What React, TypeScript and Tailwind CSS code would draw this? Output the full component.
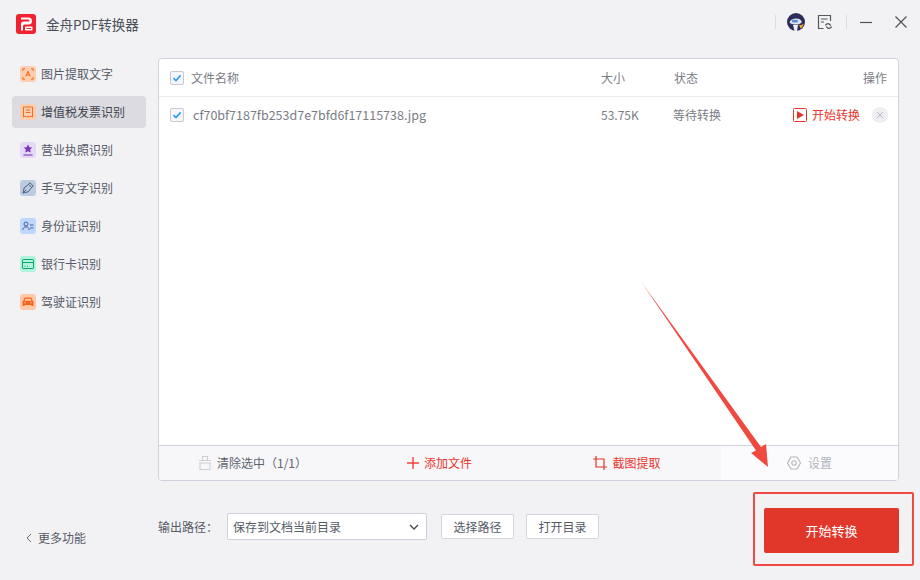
import React from "react";

const font = { fontFamily: '"Noto Sans CJK SC", "Noto Sans", sans-serif' };

function Check() {
  return (
    <span className="flex h-[14px] w-[14px] shrink-0 items-center justify-center rounded-[2px] border border-[#c9c9cf] bg-[#f4f6fb]">
      <svg width="10" height="10" viewBox="0 0 10 10" fill="none">
        <path d="M1.5 5.2 4 7.6 8.6 2.4" stroke="#2f9bf4" strokeWidth="1.6" />
      </svg>
    </span>
  );
}

function Tile({ bg, children }: { bg: string; children: React.ReactNode }) {
  return (
    <span className={`flex h-4 w-4 shrink-0 items-center justify-center rounded-[3px] ${bg}`}>
      <svg width="12" height="12" viewBox="0 0 12 12" fill="none">{children}</svg>
    </span>
  );
}

const navItems: { label: string; active?: boolean; bg: string; icon: React.ReactNode }[] = [
  {
    label: "图片提取文字",
    bg: "bg-[#ffcdb0]",
    icon: (
      <g stroke="#f3691d" strokeWidth="1">
        <path d="M.8 3V.8H3M9 .8h2.2V3M.8 9v2.2H3M9 11.2h2.2V9" />
        <path d="M3.8 8.5 6 3.2l2.2 5.3M4.6 7h2.8" />
      </g>
    ),
  },
  {
    label: "增值税发票识别",
    active: true,
    bg: "bg-[#ffcdb0]",
    icon: (
      <g stroke="#f3691d" strokeWidth="1">
        <path d="M1.5 1h9v10l-1.5-.8-1.5.8-1.5-.8-1.5.8-1.5-.8-1.5.8z" />
        <path d="M3.8 4h4.4M3.8 6.5h4.4" />
      </g>
    ),
  },
  {
    label: "营业执照识别",
    bg: "bg-[#e4d9f6]",
    icon: (
      <g>
        <path d="M6 .6 7.4 3.2l2.8.4-2 2 .5 2.9L6 7.2 3.300 8.500l.5-2.900-2-2 2.800-.4z" fill="#7b35b8" />
        <path d="M1.500 11h9" stroke="#7b35b8" strokeWidth="1.100" />
      </g>
    ),
  },
  {
    label: "手写文字识别",
    bg: "bg-[#bccbe0]",
    icon: (
      <g stroke="#4d5f86" strokeWidth="1">
        <path d="M1 11 2.200 5.800 6.600 2.400 9.600 5.400 6.200 9.800z" />
        <path d="M6.600 2.400 8 .8l3.200 3.200-1.600 1.400M1 11l3.200-3.200" />
      </g>
    ),
  },
  {
    label: "身份证识别",
    bg: "bg-[#bfd6fd]",
    icon: (
      <g stroke="#45619e" strokeWidth="1">
        <circle cx="4" cy="4" r="2" />
        <path d="M.8 10c.3-2.200 1.500-3.200 3.200-3.200S6.900 7.800 7.200 10M8 5h3.400M8 8h3.400" />
      </g>
    ),
  },
  {
    label: "银行卡识别",
    bg: "bg-[#b3f3dd]",
    icon: (
      <g stroke="#0ca56e" strokeWidth="1">
        <rect x=".5" y="1.500" width="11" height="9" rx=".6" />
        <path d="M.5 4.500h11" />
        <path d="M2.500 8.300h1M5 8.300h1" />
      </g>
    ),
  },
  {
    label: "驾驶证识别",
    bg: "bg-[#ffc9a8]",
    icon: (
      <g>
        <path d="M2.600 1.500h6.800l1.300 3.200.8.600V10H9.500V9H2.500v1H.5V5.300l.8-.6zM3.300 2.700l-.8 2h7l-.8-2z" fill="#f8621a" fillRule="evenodd" />
        <circle cx="3" cy="6.800" r=".8" fill="#ffc9a8" />
        <circle cx="9" cy="6.800" r=".8" fill="#ffc9a8" />
      </g>
    ),
  },
];

export default function App() {
  return (
    <div style={font} className="relative flex h-[580px] w-[920px] flex-col overflow-hidden bg-[#f2f2f5] text-[12px] text-[#555a66]">
      {/* Title bar */}
      <header className="flex h-[58px] shrink-0 items-start">
        <div className="flex items-center pl-4 pt-3">
          <svg width="20" height="20" viewBox="0 0 20 20" className="mb-[2px]">
            <rect width="20" height="20" rx="3" fill="#f0222f" />
            <path d="M5 3.500h7.500a3.500 3.500 0 0 1 0 7H8.500a1.500 1.500 0 0 0-1.500 1.500v4.500H5V9.800a2.500 2.500 0 0 1 2.500-2.300h5a1 1 0 0 0 0-2H5z" fill="#fff" />
            <rect x="9" y="12.500" width="7.500" height="4" rx="1" fill="#fff" />
            <path d="M10.500 14.500h4.500" stroke="#f0222f" strokeWidth="1" />
          </svg>
          <span className="ml-[10px] text-[13.5px] leading-[25px] text-[#4b4f58]">金舟PDF转换器</span>
        </div>
        <div className="ml-auto flex items-center pt-[12px]">
          <span className="h-[14px] w-px bg-[#dcdce0]" />
          <svg width="20" height="20" viewBox="0 0 20 20" className="ml-[10px]">
            <circle cx="10" cy="10" r="9" fill="#2c2c5a" />
            <path d="M3.500 10.500c1-3 3.500-4 6.500-4s5 1 6 3.500c-2 2-3 2.500-6 2.500s-5-.5-6.500-2z" fill="#dfe3ee" />
            <rect x="6" y="7.800" width="6" height="2.600" rx="1.200" fill="#5a8fd0" />
            <path d="M7 13h5l-1 6H8.500z" fill="#eef0f6" />
            <path d="M13 13l2 4 3-5.500-2.500 1.500z" fill="#f5a623" />
          </svg>
          <svg width="16" height="16" viewBox="0 0 16 16" fill="none" stroke="#55585f" strokeWidth="1.200" className="ml-[11px]">
            <path d="M6.500 14.500H1.500v-13h12v5.500" />
            <path d="M4 5h6.500M4 8h3" />
            <path d="M8.500 11.500c.4-1.700 2.700-2.500 4.200-1l1 1.200M14.500 12.500c-.5 1.800-2.900 2.400-4.300 1l-.9-1" />
          </svg>
          <span className="ml-[13px] h-[14px] w-px bg-[#dcdce0]" />
          <svg width="14" height="14" viewBox="0 0 14 14" stroke="#50535a" strokeWidth="1.200" className="ml-[12px]">
            <path d="M1 7.500h12" />
          </svg>
          <svg width="14" height="14" viewBox="0 0 14 14" stroke="#50535a" strokeWidth="1.200" className="ml-[21px] mr-[12px]">
            <path d="M1.500 1.500l11 11M12.500 1.500l-11 11" />
          </svg>
        </div>
      </header>

      <div className="flex flex-1">
        {/* Sidebar */}
        <aside className="flex w-[158px] shrink-0 flex-col justify-between pb-[33px] pl-3 pr-3">
          <nav className="flex flex-col gap-[6px]">
            {navItems.map((item) => (
              <div
                key={item.label}
                className={`flex h-[32px] w-[134px] items-center rounded-[4px] pl-2 ${item.active ? "bg-[#dcdce0] text-[#3f434d]" : ""}`}
              >
                <Tile bg={item.bg}>{item.icon}</Tile>
                <span className="ml-[5px]">{item.label}</span>
              </div>
            ))}
          </nav>
          <div className="flex items-center pl-[12px]">
            <svg width="10" height="12" viewBox="0 0 10 12" fill="none" stroke="#666a73" strokeWidth="1">
              <path d="M7 2 3 6l4 4" />
            </svg>
            <span className="ml-[4px]">更多功能</span>
          </div>
        </aside>

        {/* Main */}
        <main className="flex w-[741px] shrink-0 flex-col">
          <section className="flex h-[423px] flex-col overflow-hidden rounded-[4px] border border-[#d2d2de] bg-white">
            <div className="flex h-[38px] shrink-0 items-center border-b border-[#ececef] pl-[11px] pr-[11px] text-[#7a7d85]">
              <Check />
              <span className="ml-[7px] w-[410px]">文件名称</span>
              <span className="w-[73px]">大小</span>
              <span>状态</span>
              <span className="ml-auto">操作</span>
            </div>
            <div className="flex h-[36px] shrink-0 items-center pl-[11px] pr-[10px] text-[#7a7d85]">
              <Check />
              <span className="ml-[9px] w-[408px] text-[12.5px]">cf70bf7187fb253d7e7bfd6f17115738.jpg</span>
              <span className="w-[72px]">53.75K</span>
              <span>等待转换</span>
              <span className="ml-auto flex items-center text-[#e8352b]">
                <svg width="14" height="14" viewBox="0 0 14 14" fill="none">
                  <rect x=".5" y=".5" width="13" height="13" rx="1" stroke="#e2352b" />
                  <path d="M4 3l7 4-7 4z" fill="#e2352b" />
                </svg>
                <span className="ml-[5px]">开始转换</span>
                <span className="ml-3 flex h-4 w-4 items-center justify-center rounded-full bg-[#eeeef2]">
                  <svg width="8" height="8" viewBox="0 0 8 8" stroke="#b9bac2" strokeWidth="1">
                    <path d="M1 1l6 6M7 1 1 7" />
                  </svg>
                </span>
              </span>
            </div>
            <div className="flex-1" />
            <div className="flex h-[35px] shrink-0 border-t border-[#d2d2de] bg-[#f7f7fa]">
              <div className="flex w-[187px] items-center justify-center text-[#60646e]">
                <svg width="14" height="16" viewBox="0 0 14 16" fill="none" stroke="#cfcfd4" strokeWidth="1.100">
                  <path d="M4.500 5V1.500h5V5M1 5.500h12M1 8h12M2 8v6.500h10V8" />
                </svg>
                <span className="ml-[5px]">清除选中（1/1）</span>
              </div>
              <div className="flex w-[187px] items-center justify-center text-[#e8352b]">
                <svg width="12" height="12" viewBox="0 0 12 12" stroke="#f0443a" strokeWidth="1.400">
                  <path d="M6 0v12M0 6h12" />
                </svg>
                <span className="ml-[5px]">添加文件</span>
              </div>
              <div className="flex w-[188px] items-center justify-center text-[#e8352b]">
                <svg width="14" height="14" viewBox="0 0 14 14" fill="none" stroke="#e2352b" strokeWidth="1.200">
                  <path d="M3 0v11h11M0 3h11v11" />
                </svg>
                <span className="ml-[5px]">截图提取</span>
              </div>
              <div className="flex flex-1 items-center justify-center bg-[#fbfbfd] text-[#b4b6bd]">
                <svg width="14" height="14" viewBox="0 0 14 14" fill="none" stroke="#b4b6bd" strokeWidth="1.100">
                  <path d="M4 1h6l3.500 6-3.500 6H4L.5 7z" />
                  <circle cx="7" cy="7" r="2.200" />
                </svg>
                <span className="ml-[7px]">设置</span>
              </div>
            </div>
          </section>

          <div className="flex flex-1 items-start pt-[27px]">
            <div className="flex h-[45px] items-center self-start">
              <span className="-mt-[8px] flex items-center">
                <span className="w-[69px] text-[#555a66]">输出路径：</span>
                <span className="flex h-[27px] w-[200px] items-center justify-between rounded-[2px] border border-[#cfcfdb] bg-white pl-[5px] pr-[7px]">
                  保存到文档当前目录
                  <svg width="10" height="10" viewBox="0 0 10 10" fill="none" stroke="#44474f" strokeWidth="1.300">
                    <path d="M1 3l4 4 4-4" />
                  </svg>
                </span>
                <span className="ml-[14px] flex h-[25px] w-[73px] items-center justify-center rounded-[2px] border border-[#d5d5e0] bg-white">选择路径</span>
                <span className="ml-[12px] flex h-[25px] w-[73px] items-center justify-center rounded-[2px] border border-[#d5d5e0] bg-white">打开目录</span>
              </span>
            </div>
            <div className="ml-[165px] flex h-[45px] w-[135px] items-center justify-center rounded-[2px] bg-[#e1372b] text-[13px] text-white">
              开始转换
            </div>
          </div>
        </main>
      </div>

      {/* Annotation */}
      <div className="absolute left-[753px] top-[492px] h-[74px] w-[161px] rounded-[2px] border-[2.500px] border-[#f04a40]" />
      <svg className="absolute left-0 top-0" width="920" height="580" viewBox="0 0 920 580" fill="none">
        <path d="M642 283 L 756 450.500 L 751 453 L 768 467 L 766 444 L 761 447 Z" fill="#f04a40" />
      </svg>
    </div>
  );
}
